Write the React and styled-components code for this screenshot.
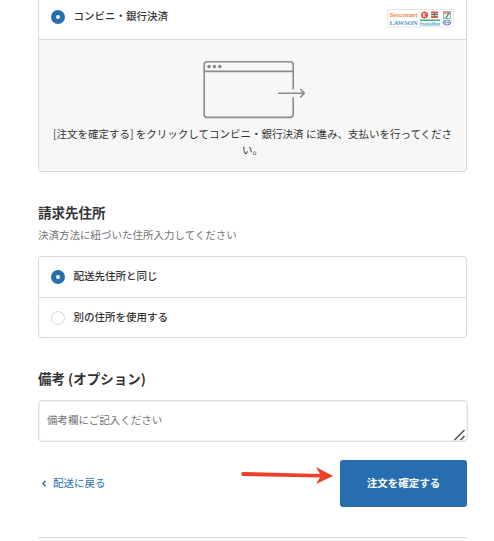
import React, { useState } from 'react';
import styled, { createGlobalStyle } from 'styled-components';

const GlobalStyle = createGlobalStyle`
  * {
    box-sizing: border-box;
  }

  body {
    margin: 0;
    background-color: #ffffff;
    color: #333333;
    font-family: 'Noto Sans CJK JP', sans-serif;
    font-size: 10.5px;
    overflow: hidden;
  }
`;

const PageWrapper = styled.main`
  width: 494px;
  height: 541px;
  padding: 0 27px 0 38px;
  overflow: hidden;
`;

const PaymentBox = styled.section`
  height: 172px;
  border: 1px solid #d9d9d9;
  border-top: none;
  border-radius: 0 0 4px 4px;
  overflow: hidden;
`;

const OptionBox = styled.div`
  height: 82px;
  margin-top: 13px;
  border: 1px solid #d9d9d9;
  border-radius: 4px;
`;

const OptionRow = styled.label`
  height: ${(props) => props.$height}px;
  padding: 0 12px ${(props) => props.$bottom || 0}px;
  display: flex;
  align-items: center;
  border-bottom: ${(props) => (props.$divided ? '1px solid #d9d9d9' : 'none')};
`;

const Radio = styled.input`
  appearance: none;
  width: 14px;
  height: 14px;
  margin: 0 8.5px 0 0;
  border: 1px solid #d9d9d9;
  border-radius: 50%;
  background-color: #ffffff;

  &:checked {
    border: 5px solid #266eaf;
  }
`;

const OptionText = styled.span`
  flex: 1;
  padding-bottom: ${(props) => (props.$raised ? 3 : 1)}px;
  line-height: 16px;
  font-weight: 500;
`;

const PaymentInfo = styled.div`
  height: 131px;
  padding-top: 21px;
  background-color: #f7f7f7;
  text-align: center;
`;

const Prompt = styled.div`
  height: 59px;
  display: flex;
  justify-content: center;
`;

const PaymentText = styled.p`
  margin: 6px 12px 0;
  line-height: 16px;
  font-weight: 400;
`;

const SectionTitle = styled.h2`
  margin: ${(props) => props.$top}px 0 0;
  font-size: 13.5px;
  font-weight: 700;
  line-height: 20px;
`;

const SectionText = styled.p`
  margin: 5px 0 0;
  color: #737373;
  line-height: 16px;
`;

const NoteWrapper = styled.div`
  position: relative;
  height: 42px;
  margin: 12px -1px 0 0;
`;

const Note = styled.textarea`
  display: block;
  width: 100%;
  height: 42px;
  padding: 11px 8px 9px;
  border: 1px solid #dedede;
  border-radius: 4px;
  box-shadow: inset 0 0 0 1px #f3f3f3;
  outline: none;
  resize: none;
  overflow: hidden;
  font-family: inherit;
  font-size: 10.5px;
  line-height: 16px;

  &::placeholder {
    color: #737373;
  }
`;

const ResizeHandle = styled.svg`
  position: absolute;
  right: 2px;
  bottom: 1px;
`;

const Footer = styled.div`
  height: 78px;
  margin-top: 18px;
  display: flex;
  justify-content: space-between;
  align-items: flex-start;
  border-bottom: 1px solid #d9d9d9;
`;

const BackLink = styled.a`
  height: 46px;
  padding: 0 0 1px 4px;
  display: flex;
  align-items: center;
  gap: 7px;
  color: #266eaf;
  line-height: 16px;
  text-decoration: none;

  svg {
    margin-top: 2px;
  }
`;

const SubmitWrapper = styled.div`
  display: flex;
  align-items: flex-start;
`;

const PointerArrow = styled.svg`
  margin: 5px 6px 0 0;
`;

const SubmitButton = styled.button`
  width: 127px;
  height: 47px;
  padding: 0 0 2px;
  border: none;
  border-radius: 3px;
  background-color: #266eaf;
  color: #ffffff;
  font-family: inherit;
  font-size: 10.5px;
  font-weight: 700;
  line-height: 16px;
`;

const LogosWrapper = styled.span`
  display: flex;
  padding-top: 2px;
`;

const StoreLogos = () => (
  <LogosWrapper>
    <svg width="67" height="19" viewBox="0 0 67 19" fontFamily="Liberation Sans, sans-serif" fontWeight="700">
      <rect x="0.5" y="0.5" width="66" height="17.5" fill="#fff" stroke="#e8e5e3" />
      <text x="2.5" y="8" fontSize="5.5" fill="#ef8548" textLength="28" lengthAdjust="spacingAndGlyphs">Seicomart</text>
      <text x="2.5" y="16" fontSize="6.6" fill="#4b94ca" fontFamily="Liberation Serif, serif" textLength="28" lengthAdjust="spacingAndGlyphs">LAWSON</text>
      <circle cx="37.5" cy="6" r="3.5" fill="#e64d40" />
      <path d="M36.2 4v4M38.8 4l-2.2 2 2.2 2" fill="none" stroke="#fff" strokeWidth="0.9" />
      <rect x="44" y="2.5" width="7" height="2" fill="#df5750" />
      <rect x="44" y="7" width="7" height="2" fill="#dd6259" />
      <path d="M44 5.7h7M47.5 4v4" stroke="#557553" strokeWidth="1.2" />
      <rect x="56.5" y="2.5" width="7" height="7" fill="#eef5ef" stroke="#71aa92" strokeWidth="0.8" />
      <path d="M57 4h6" stroke="#ed7353" strokeWidth="1.4" />
      <path d="M62 4l-3 5" stroke="#348e73" strokeWidth="1.4" />
      <path d="M33 11.2h20" stroke="#45b46b" strokeWidth="1.4" />
      <text x="33" y="15.7" fontSize="4.2" fill="#4fa9d3" textLength="20" lengthAdjust="spacingAndGlyphs">FamilyMart</text>
      <path d="M33 16.4h20" stroke="#79bddd" strokeWidth="0.6" />
      <ellipse cx="60" cy="13.5" rx="4" ry="2.5" fill="#e6eef8" stroke="#6e8fc3" />
      <path d="M58 11v5M62 11v5M57 13.5h6" stroke="#6e8fc3" strokeWidth="0.8" />
    </svg>
  </LogosWrapper>
);

const BrowserIcon = () => (
  <svg width="104" height="59" viewBox="0 0 104 59" fill="none" stroke="#8b8b8b" strokeWidth="1.6">
    <path d="M92.2 28.5V3.6Q92.2 0.8 89.4 0.8H6Q3.2 0.8 3.2 3.6v50q0 2.8 2.8 2.8h83.4q2.8 0 2.8-2.8V36.5M3.2 10.4h89M77 32.2h26.5M99.2 28l4.2 4.2-4.2 4.2" />
    <g fill="#8b8b8b" stroke="none">
      <circle cx="8" cy="5.6" r="1.8" />
      <circle cx="13.4" cy="5.6" r="1.8" />
      <circle cx="18.8" cy="5.6" r="1.8" />
    </g>
  </svg>
);

const App = () => {
  const [address, setAddress] = useState('same');

  return (
    <>
      <GlobalStyle />
      <PageWrapper>
        <PaymentBox>
          <OptionRow $height={40} $bottom={5} $divided>
            <Radio type="radio" name="payment" defaultChecked />
            <OptionText $raised>コンビニ・銀行決済</OptionText>
            <StoreLogos />
          </OptionRow>
          <PaymentInfo>
            <Prompt>
              <BrowserIcon />
            </Prompt>
            <PaymentText>
              [注文を確定する] をクリックしてコンビニ・銀行決済 に進み、支払いを行ってください。
            </PaymentText>
          </PaymentInfo>
        </PaymentBox>

        <SectionTitle $top={30}>請求先住所</SectionTitle>
        <SectionText>決済方法に紐づいた住所入力してください</SectionText>
        <OptionBox>
          <OptionRow $height={41} $divided>
            <Radio
              type="radio"
              name="address"
              checked={address === 'same'}
              onChange={() => setAddress('same')}
            />
            <OptionText $raised>配送先住所と同じ</OptionText>
          </OptionRow>
          <OptionRow $height={39}>
            <Radio
              type="radio"
              name="address"
              checked={address === 'other'}
              onChange={() => setAddress('other')}
            />
            <OptionText>別の住所を使用する</OptionText>
          </OptionRow>
        </OptionBox>

        <SectionTitle $top={30}>備考 (オプション)</SectionTitle>
        <NoteWrapper>
          <Note placeholder="備考欄にご記入ください" />
          <ResizeHandle width="12" height="12" viewBox="0 0 12 12" stroke="#4d4d4d" strokeWidth="1.5">
            <path d="M0.5 11L10.5 1M6.5 11l4-4" />
          </ResizeHandle>
        </NoteWrapper>

        <Footer>
          <BackLink href="#">
            <svg width="4" height="7" viewBox="0 0 4 7" fill="none" stroke="#266eaf" strokeWidth="1.3">
              <path d="M3.5 0.7L0.9 3.5l2.6 2.8" />
            </svg>
            配送に戻る
          </BackLink>
          <SubmitWrapper>
            <PointerArrow width="94" height="22" viewBox="0 0 94 22" fill="#ee4027">
              <path d="M2.5 7Q0 9 2.5 11L80 12.5 76 19 93 11 76 2 80 9Z" />
            </PointerArrow>
            <SubmitButton type="button">注文を確定する</SubmitButton>
          </SubmitWrapper>
        </Footer>
      </PageWrapper>
    </>
  );
};

export default App;
